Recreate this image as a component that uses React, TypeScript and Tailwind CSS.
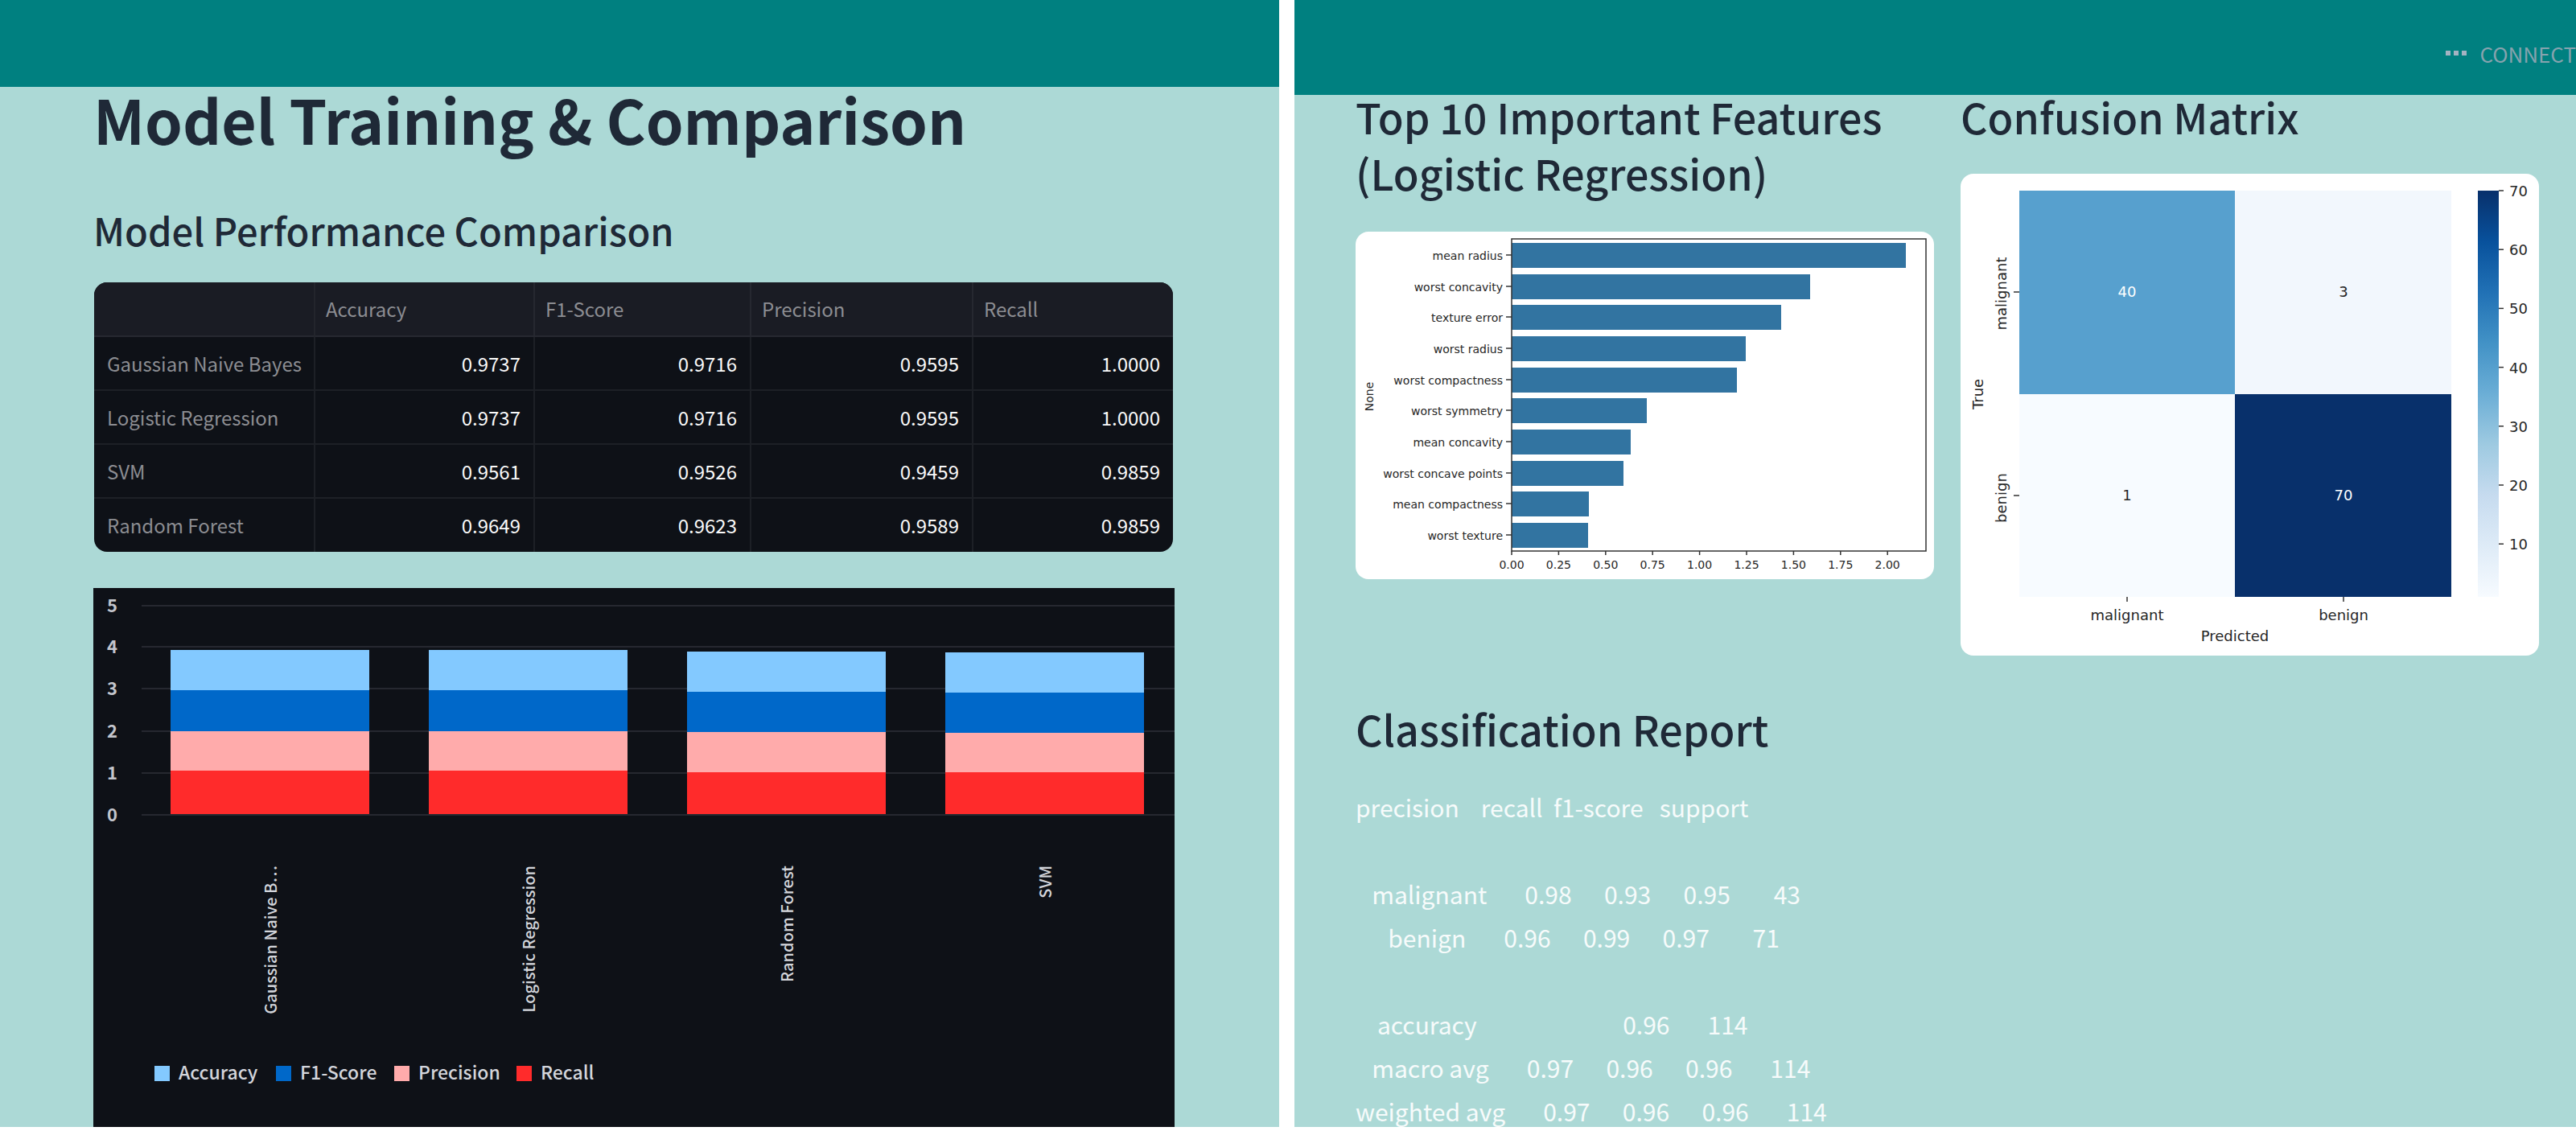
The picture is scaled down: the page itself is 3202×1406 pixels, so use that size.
const scores = [
  { model: "Gaussian Naive Bayes", values: ["0.9737", "0.9716", "0.9595", "1.0000"] },
  { model: "Logistic Regression", values: ["0.9737", "0.9716", "0.9595", "1.0000"] },
  { model: "SVM", values: ["0.9561", "0.9526", "0.9459", "0.9859"] },
  { model: "Random Forest", values: ["0.9649", "0.9623", "0.9589", "0.9859"] },
];

const metrics = ["Accuracy", "F1-Score", "Precision", "Recall"];

const stacks = [
  { label: "Gaussian Naive B…", edges: [77, 127, 178, 227] },
  { label: "Logistic Regression", edges: [77, 127, 178, 227] },
  { label: "Random Forest", edges: [79, 129, 179, 229] },
  { label: "SVM", edges: [80, 130, 180, 229] },
];
const stackColors = ["#83c9ff", "#0068c9", "#ffabab", "#ff2b2b"];
const baseLine = 281;

const gridLines = [
  { value: 5, y: 22 },
  { value: 4, y: 73 },
  { value: 3, y: 125 },
  { value: 2, y: 178 },
  { value: 1, y: 230 },
  { value: 0, y: 282 },
];

const legend = [
  { label: "Accuracy", x: 76 },
  { label: "F1-Score", x: 227 },
  { label: "Precision", x: 374 },
  { label: "Recall", x: 526 },
];

const features = [
  { name: "mean radius", width: 490 },
  { name: "worst concavity", width: 371 },
  { name: "texture error", width: 335 },
  { name: "worst radius", width: 291 },
  { name: "worst compactness", width: 280 },
  { name: "worst symmetry", width: 168 },
  { name: "mean concavity", width: 148 },
  { name: "worst concave points", width: 139 },
  { name: "mean compactness", width: 96 },
  { name: "worst texture", width: 95 },
];
const featureTicks = ["0.00", "0.25", "0.50", "0.75", "1.00", "1.25", "1.50", "1.75", "2.00"];

const blues = ["#08306b", "#08519c", "#2171b5", "#4292c6", "#6baed6", "#9ecae1", "#c6dbef", "#deebf7", "#f7fbff"];
const barTicks = [70, 60, 50, 40, 30, 20, 10];

const report = `precision    recall  f1-score   support

   malignant       0.98      0.93      0.95        43
      benign       0.96      0.99      0.97        71

    accuracy                           0.96       114
   macro avg       0.97      0.96      0.96       114
weighted avg       0.97      0.96      0.96       114`;

function ScoreTable() {
  return (
    <div className="ml-px mr-0.5 overflow-hidden rounded-2xl bg-[#0e1117]">
      <table className="w-full table-fixed border-collapse text-2xl">
        <colgroup>
          <col className="w-[274px]" />
          <col className="w-[273px]" />
          <col className="w-[269px]" />
          <col className="w-[276px]" />
          <col />
        </colgroup>
        <thead>
          <tr className="h-[67px] border-b-2 border-[#262830] bg-[#1a1c24] text-left text-[#8c8d92]">
            <td className="border-r-2 border-[#23252c]" />
            {metrics.map((m) => (
              <th key={m} scope="col" className="border-r-2 border-[#262830] px-[13px] font-normal last:border-r-0">
                {m}
              </th>
            ))}
          </tr>
        </thead>
        <tbody>
          {scores.map((row) => (
            <tr key={row.model} className="h-[67px] border-b-2 border-[#1d2026] last:border-b-0">
              <th scope="row" className="whitespace-nowrap border-r-2 border-[#1d2026] pl-4 text-left font-normal text-[#8c8d92]">
                {row.model}
              </th>
              {row.values.map((v, i) => (
                <td key={i} className="border-r-2 border-[#1d2026] pr-4 text-right text-[#fafafa] last:border-r-0">
                  {v}
                </td>
              ))}
            </tr>
          ))}
        </tbody>
      </table>
    </div>
  );
}

function StackedChart() {
  return (
    <svg viewBox="0 0 1344 680" className="block w-full bg-[#0e1117]" role="img" aria-label="Model scores, stacked">
      {gridLines.map((g) => (
        <g key={g.value}>
          <line x1="60" x2="1344" y1={g.y} y2={g.y} stroke="#262830" strokeWidth="2" />
          <text x="30" y={g.y + 8} textAnchor="end" className="fill-[#c3c5cc] text-[22px] font-semibold">
            {g.value}
          </text>
        </g>
      ))}
      {stacks.map((s, i) => {
        const x = 96 + i * 321;
        return (
          <g key={s.label}>
            {s.edges.map((top, j) => (
              <rect
                key={j}
                x={x}
                y={top}
                width="247"
                height={(s.edges[j + 1] ?? baseLine) - top}
                fill={stackColors[j]}
              />
            ))}
            <text
              transform={`translate(${228 + i * 321} 345) rotate(-90)`}
              textAnchor="end"
              className="fill-[#d3d5db] text-[20px] font-medium"
            >
              {s.label}
            </text>
          </g>
        );
      })}
      {legend.map((l, i) => (
        <g key={l.label}>
          <rect x={l.x} y="594" width="19" height="19" fill={stackColors[i]} />
          <text x={l.x + 30} y="611" className="fill-[#d3d5db] text-[23px] font-medium">
            {l.label}
          </text>
        </g>
      ))}
    </svg>
  );
}

function FeatureChart() {
  return (
    <svg
      viewBox="0 0 719 432"
      className="block w-full rounded-2xl bg-white font-['DejaVu_Sans',sans-serif] text-[14px]"
      role="img"
      aria-label="Feature importance"
    >
      {features.map((f, i) => {
        const y = Math.round(14 + i * 38.67);
        return (
          <g key={f.name}>
            <rect x="194" y={y} width={f.width} height="31" fill="#3274a1" />
            <line x1="187" x2="194" y1={y + 15} y2={y + 15} stroke="#333" strokeWidth="1.5" />
            <text x="183" y={y + 21} textAnchor="end" className="fill-[#262626]">
              {f.name}
            </text>
          </g>
        );
      })}
      <rect x="194" y="9" width="515" height="388" fill="none" stroke="#333" strokeWidth="1.5" />
      {featureTicks.map((t, i) => {
        const x = 194 + i * 58.4;
        return (
          <g key={t}>
            <line x1={x} x2={x} y1="397" y2="402" stroke="#333" strokeWidth="1.5" />
            <text x={x} y="419" textAnchor="middle" className="fill-[#262626]">
              {t}
            </text>
          </g>
        );
      })}
      <text transform="translate(22 205) rotate(-90)" textAnchor="middle" className="fill-[#262626]">
        None
      </text>
    </svg>
  );
}

function ConfusionChart() {
  return (
    <svg
      viewBox="0 0 719 599"
      className="block w-full rounded-2xl bg-white font-['DejaVu_Sans',sans-serif] text-[18px]"
      role="img"
      aria-label="Confusion matrix"
    >
      <defs>
        <linearGradient id="blues" x1="0" y1="0" x2="0" y2="1">
          {blues.map((c, i) => (
            <stop key={c} offset={i / (blues.length - 1)} stopColor={c} />
          ))}
        </linearGradient>
      </defs>
      <rect x="73" y="21" width="268" height="253" fill="#57a0ce" />
      <rect x="341" y="21" width="269" height="253" fill="#f2f7fd" />
      <rect x="73" y="274" width="268" height="252" fill="#f7fbff" />
      <rect x="341" y="274" width="269" height="252" fill="#08306b" />
      <g textAnchor="middle">
        <text x="207" y="153" className="fill-white">40</text>
        <text x="476" y="153" className="fill-[#262626]">3</text>
        <text x="207" y="406" className="fill-[#262626]">1</text>
        <text x="476" y="406" className="fill-white">70</text>
        <text x="207" y="555" className="fill-[#262626]">malignant</text>
        <text x="476" y="555" className="fill-[#262626]">benign</text>
        <text x="341" y="581" className="fill-[#262626]">Predicted</text>
        <text transform="translate(57 149) rotate(-90)" className="fill-[#262626]">malignant</text>
        <text transform="translate(57 403) rotate(-90)" className="fill-[#262626]">benign</text>
        <text transform="translate(28 274) rotate(-90)" className="fill-[#262626]">True</text>
      </g>
      <path d="M66 147h7M66 400h7M207 526v6M476 526v6" stroke="#333" strokeWidth="1.5" />
      <rect x="643" y="21" width="26" height="505" fill="url(#blues)" />
      {barTicks.map((t, i) => {
        const y = 21 + i * 73.2;
        return (
          <g key={t}>
            <line x1="669" x2="675" y1={y} y2={y} stroke="#333" strokeWidth="1.5" />
            <text x="682" y={y + 7} className="fill-[#262626]">
              {t}
            </text>
          </g>
        );
      })}
    </svg>
  );
}

export default function App() {
  return (
    <div className="grid h-screen grid-cols-[1590fr_1593fr] gap-[19px] overflow-hidden bg-white pb-[5px] font-['Noto_Sans_CJK_SC',sans-serif] text-[#1f2937]">
      <section className="flex min-h-0 flex-col overflow-hidden bg-[#acd9d6]">
        <header className="h-[108px] shrink-0 bg-[#008080]" />
        <main className="pl-[116px] pr-[130px]">
          <h1 className="text-[75px] font-bold leading-[80px]">Model Training &amp; Comparison</h1>
          <h2 className="mt-[70px] text-[47px] font-medium leading-[56px]">Model Performance Comparison</h2>
          <div className="mt-[37px]">
            <ScoreTable />
          </div>
          <div className="mt-[45px]">
            <StackedChart />
          </div>
        </main>
      </section>

      <section className="flex min-h-0 flex-col overflow-hidden bg-[#acd9d6]">
        <header className="flex h-[118px] shrink-0 items-center justify-end gap-4 bg-[#008080] pt-[14px] text-[26px] text-[#86a3ae]">
          <span className="flex gap-[4px]" aria-hidden="true">
            <i className="size-[6px] bg-[#a3b3c2]" />
            <i className="size-[6px] bg-[#a3b3c2]" />
            <i className="size-[6px] bg-[#a3b3c2]" />
          </span>
          <span>CONNECT</span>
        </header>
        <main className="-mt-2 pl-[76px] pr-[46px]">
          <div className="grid grid-cols-2 items-start gap-[33px]">
            <div>
              <h2 className="text-[52px] font-medium leading-[70px]">
                Top 10 Important Features
                <br />
                (Logistic Regression)
              </h2>
              <div className="mt-[38px]">
                <FeatureChart />
              </div>
            </div>
            <div>
              <h2 className="text-[52px] font-medium leading-[70px]">Confusion Matrix</h2>
              <div className="mt-9">
                <ConfusionChart />
              </div>
            </div>
          </div>
          <h2 className="mt-14 text-[52px] font-medium leading-[70px]">Classification Report</h2>
          <pre className="mt-[35px] font-['Noto_Sans_CJK_SC',sans-serif] text-[30px] leading-[54px] text-white/90">{report}</pre>
        </main>
      </section>
    </div>
  );
}
